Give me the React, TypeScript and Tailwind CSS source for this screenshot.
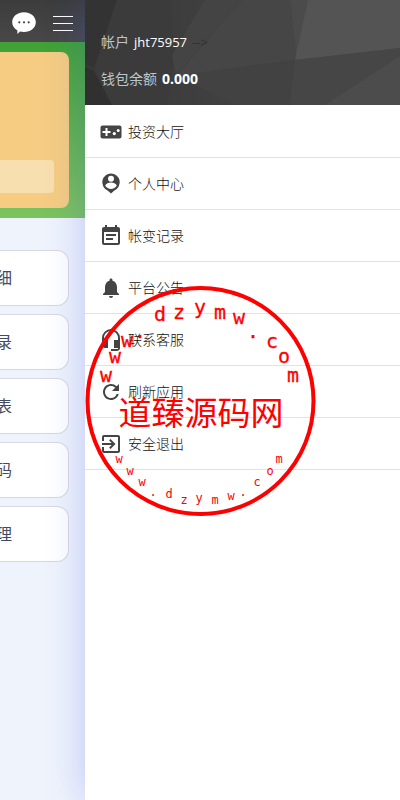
import React from 'react';
import {
    MdEventNote,
    MdExitToApp,
    MdHeadsetMic,
    MdNotifications,
    MdRefresh,
} from 'react-icons/md';

interface IconProps {
    className?: string;
}

const GamepadIcon: React.FC<IconProps> = ({ className }) => (
    <svg viewBox="0 0 24 24" className={className} aria-hidden="true">
        <rect x="1.5" y="5.5" width="21" height="13" rx="2" fill="currentColor" />
        <path d="M7.5 8v8M3.5 12h8" stroke="white" strokeWidth="2" />
        <circle cx="15.3" cy="13.6" r="1.6" fill="white" />
        <circle cx="19.2" cy="10.4" r="1.5" fill="white" />
    </svg>
);

const AccountPinIcon: React.FC<IconProps> = ({ className }) => (
    <svg viewBox="0 0 24 24" className={className} aria-hidden="true">
        <path d="M12 1.5a8.8 8.8 0 0 0-3.4 16.9L12 21.5l3.4-3.1A8.8 8.8 0 0 0 12 1.5z" fill="currentColor" />
        <circle cx="12" cy="6.7" r="3" fill="white" />
        <path d="M6.2 13.8c.6-2.2 3.6-3.2 5.8-3.2s5.2 1 5.8 3.2a6.9 6.9 0 0 1-11.6 0z" fill="white" />
    </svg>
);

const ChatIcon: React.FC<IconProps> = ({ className }) => (
    <svg viewBox="0 0 24 24" className={className} aria-hidden="true">
        <path d="M12 1.3c6.6 0 11.8 4.3 11.8 9.9S18.6 21 12 21c-1.4 0-2.7-.2-3.9-.5-.9.9-1.8 1.9-2.8 2.4.3-1.3.2-2.7-.1-3.7C2.1 17.4.2 14.5.2 11.2.2 5.6 5.4 1.3 12 1.3z" fill="white" />
        <circle cx="7.3" cy="11.3" r="1.1" fill="#444" />
        <circle cx="12" cy="11.3" r="1.1" fill="#444" />
        <circle cx="16.7" cy="11.3" r="1.1" fill="#444" />
    </svg>
);

const MENU_ITEMS = [
    { label: '投资大厅', Icon: GamepadIcon },
    { label: '个人中心', Icon: AccountPinIcon },
    { label: '帐变记录', Icon: MdEventNote },
    { label: '平台公告', Icon: MdNotifications },
    { label: '联系客服', Icon: MdHeadsetMic },
    { label: '刷新应用', Icon: MdRefresh },
    { label: '安全退出', Icon: MdExitToApp },
];

const PAGE_CARDS = ['细', '录', '表', '码', '理'];

type Letter = [string, number, number];

const OUTER_LETTERS: Letter[] = [
    ['w', 21, 97], ['w', 30, 78], ['w', 42, 62], ['.', 55, 53], ['d', 75, 36],
    ['z', 94, 34], ['y', 115, 29], ['m', 135, 34], ['w', 154, 39], ['.', 168, 53],
    ['c', 187, 63], ['o', 199, 78], ['m', 208, 97],
];

const INNER_LETTERS: Letter[] = [
    ['w', 34, 178], ['w', 45, 190], ['w', 57, 201], ['.', 68, 211], ['d', 84, 213],
    ['z', 99, 219], ['y', 114, 217], ['m', 130, 219], ['w', 146, 215], ['.', 158, 211],
    ['c', 172, 201], ['o', 185, 190], ['m', 194, 178],
];

const Page = () => (
    <div className="w-[85px] shrink-0 overflow-hidden bg-[#eff3fc]">
        <header className="flex h-[42px] items-center justify-end gap-[17px] bg-linear-to-b from-[#3c3c3c] to-[#484848] pt-1 pr-3">
            <button type="button" aria-label="chat">
                <ChatIcon className="size-6" />
            </button>
            <button type="button" aria-label="menu" className="flex w-5 flex-col gap-1.5">
                <span className="h-px bg-white" />
                <span className="h-px bg-white" />
                <span className="h-px bg-white" />
            </button>
        </header>
        <section className="h-44 bg-linear-to-b from-[#3fa136] to-[#7cc35e] py-2.5 pr-4">
            <div className="flex h-full flex-col justify-end rounded-r-lg bg-[#f5cc82] pr-[15px] pb-[15px]">
                <div className="h-[33px] rounded-r bg-[#f8dfaf]" />
            </div>
        </section>
        <ul className="mt-8 flex flex-col gap-2 pr-4">
            {PAGE_CARDS.map((label) => (
                <li key={label} className="flex h-14 items-center rounded-r-xl border border-l-0 border-[#d8d9dd] bg-white text-base text-[#434a63]">
                    <span className="-ml-1">{label}</span>
                </li>
            ))}
        </ul>
    </div>
);

const DrawerHeader = () => (
    <div className="relative h-[105px] overflow-hidden bg-[#424242]">
        <svg viewBox="0 0 315 105" preserveAspectRatio="none" className="absolute inset-0 h-full w-full" aria-hidden="true">
            <defs>
                <linearGradient id="facet" x1="0" x2="1" y1="0" y2="0">
                    <stop offset="0" stopColor="#383838" />
                    <stop offset="1" stopColor="#4a4a4a" />
                </linearGradient>
            </defs>
            <rect width="315" height="105" fill="url(#facet)" />
            <path d="M0 0h32L9 68 0 64z" fill="#333" />
            <path d="M0 67l9 4 18 34H0z" fill="#303030" />
            <path d="M32 0h53l4 50-7 55H27L9 70z" fill="#3b3b3b" />
            <path d="M120 0h37L91 75l-4-20z" fill="#444" />
            <path d="M157 0h48l7 59-26 4L91 76z" fill="#464646" />
            <path d="M205 0h18l-11 59z" fill="#4b4b4b" />
            <path d="M223 0h92v48L210 60z" fill="#545454" />
            <path d="M91 76l119-16-5 45h-55z" fill="#424242" />
            <path d="M210 60l105-12v8l-75 49h-35z" fill="#464646" />
            <path d="M315 56v49h-75z" fill="#4c4c4c" />
        </svg>
        <div className="relative flex flex-col gap-[17px] px-4 pt-8 leading-5">
            <p className="flex items-center gap-[5px]">
                <span className="text-sm text-[#bcc6cd]">帐户</span>
                <span className="text-[13px] text-white">jht75957</span>
                <span className="text-[13px] text-[#2f2f2f]">--&gt;</span>
            </p>
            <p className="flex items-center gap-[5px]">
                <span className="text-sm text-[#bcc6cd]">钱包余额</span>
                <span className="text-sm font-bold text-white">0.000</span>
            </p>
        </div>
    </div>
);

const Drawer = () => (
    <aside className="relative flex-1 bg-white shadow-[0_0_36px_rgba(70,90,230,0.3)]">
        <DrawerHeader />
        <nav className="pt-px">
            {MENU_ITEMS.map(({ label, Icon }) => (
                <a key={label} href="#" className="flex h-[52px] items-center gap-[5px] border-b border-[#e2e2e2] pl-3.5 text-sm font-light text-[#111]">
                    <Icon className="size-6 text-[#444]" />
                    {label}
                </a>
            ))}
        </nav>
    </aside>
);

const Stamp = () => (
    <svg viewBox="0 0 232 232" className="pointer-events-none absolute top-[285px] left-[85px] size-[232px]" fill="red">
        <circle cx="115.5" cy="116" r="113" fill="none" stroke="red" strokeWidth="4" />
        <g className="font-['DejaVu_Sans_Mono',monospace] text-xl" textAnchor="middle" stroke="red" strokeWidth="0.3">
            {OUTER_LETTERS.map(([char, x, y]) => (
                <text key={x} x={x} y={y}>{char}</text>
            ))}
        </g>
        <text x="116" y="140" textAnchor="middle" className="font-['Noto_Sans_CJK_SC',sans-serif] text-[33px]">道臻源码网</text>
        <g className="font-['DejaVu_Sans_Mono',monospace] text-xs" textAnchor="middle">
            {INNER_LETTERS.map(([char, x, y]) => (
                <text key={x} x={x} y={y}>{char}</text>
            ))}
        </g>
    </svg>
);

export default function App() {
    return (
        <div className="relative flex min-h-screen overflow-hidden font-['Open_Sans','Noto_Sans_CJK_SC',sans-serif]">
            <Page />
            <Drawer />
            <Stamp />
        </div>
    );
}
